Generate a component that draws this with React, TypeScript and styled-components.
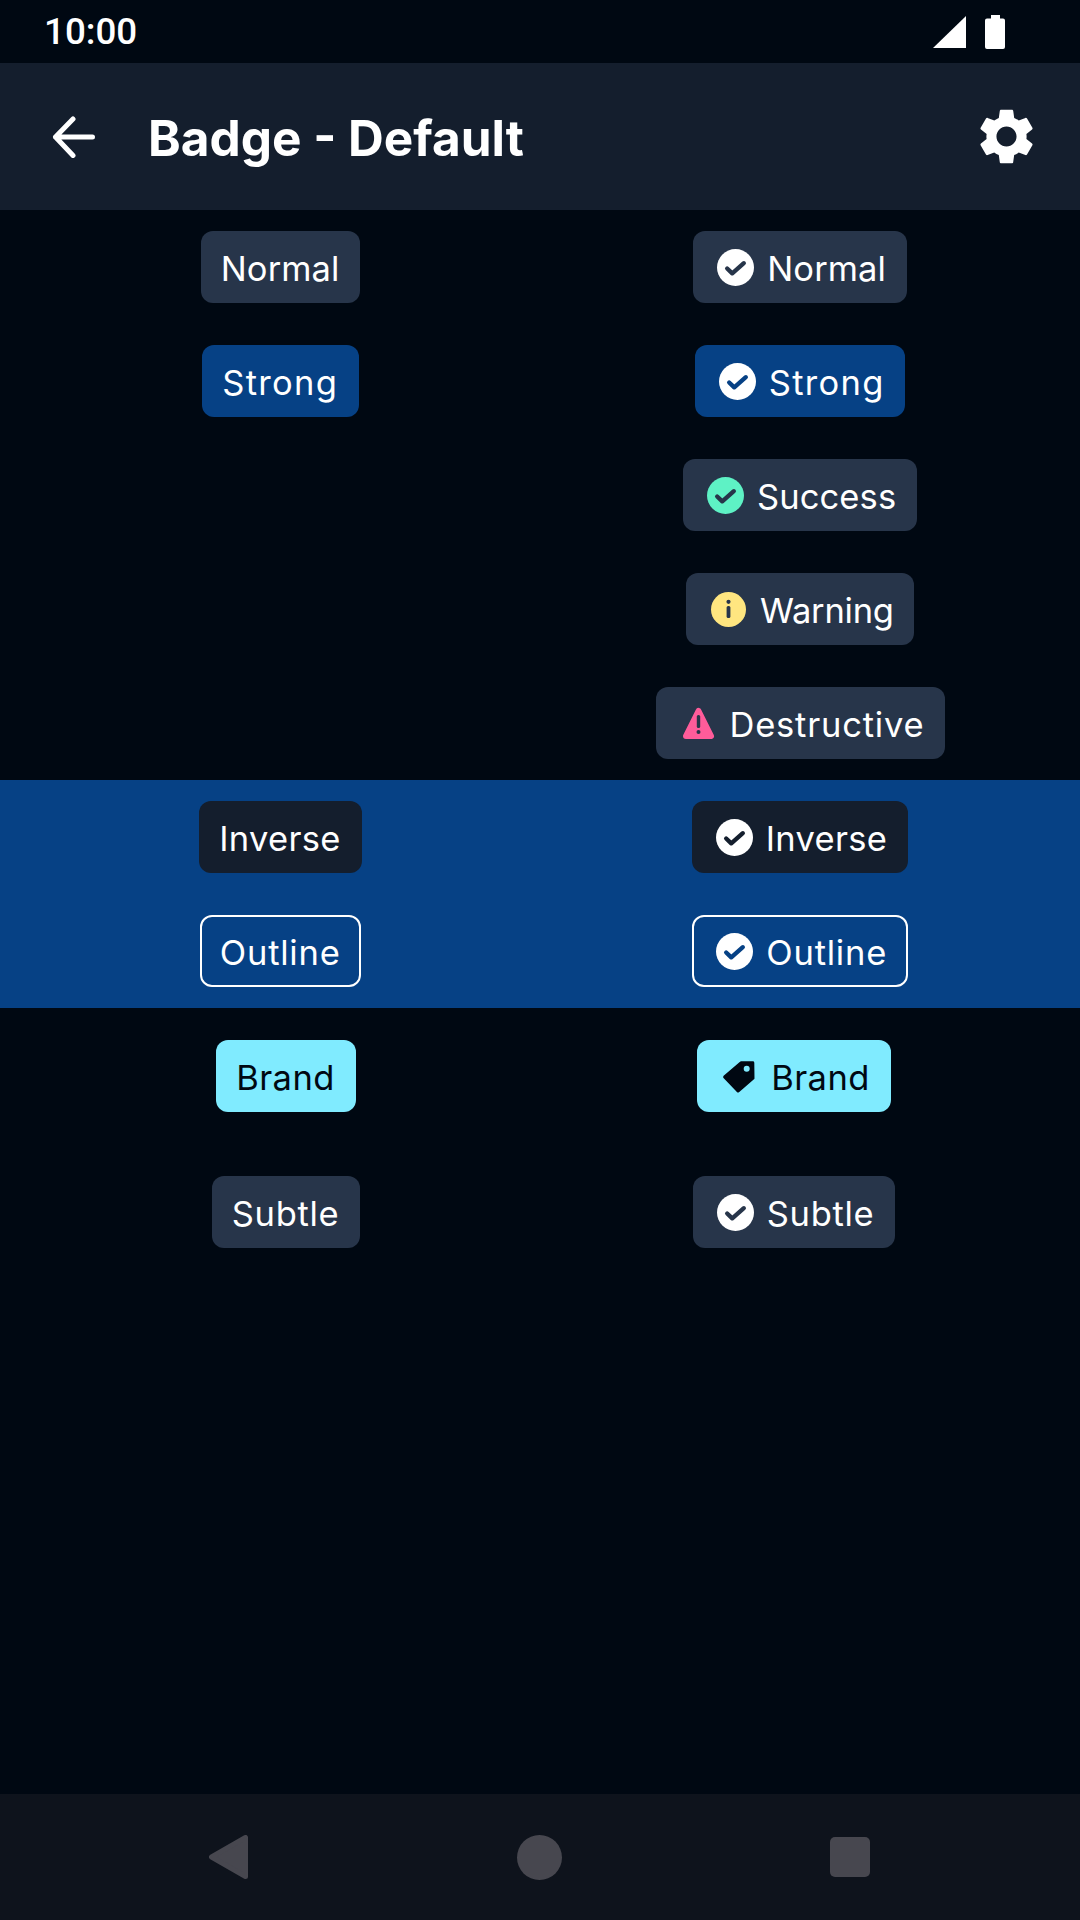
import React from 'react'
import styled, { createGlobalStyle } from 'styled-components'

const colors = {
  page: '#000812',
  toolbar: '#141e2d',
  subtle: '#27354a',
  strong: '#064185',
  inverse: '#141e2d',
  brand: '#80ebff',
  ink: '#000812',
  white: '#ffffff',
  success: '#5ef2c5',
  warning: '#ffe680',
  destructive: '#ff5c9a',
  navBar: '#0e131c',
  navIcon: '#47474f'
}

// measured per word, the original typeface runs a little differently from Inter
const labelMetrics: Record<string, { width: number; spacing: number }> = {
  Normal: { width: 115.5, spacing: 0.1 },
  Strong: { width: 112.5, spacing: 1.3 },
  Success: { width: 136, spacing: 0.1 },
  Warning: { width: 130, spacing: -0.25 },
  Destructive: { width: 191, spacing: 0.8 },
  Inverse: { width: 118.5, spacing: 0.3 },
  Outline: { width: 117.5, spacing: 0.8 },
  Brand: { width: 95.5, spacing: 0.4 },
  Subtle: { width: 104.5, spacing: 0.7 }
}

const GlobalStyle = createGlobalStyle`
  html, body {
    margin: 0;
    padding: 0;
    background: ${colors.page};
  }
`

const Screen = styled.div`
  width: 1080px;
  height: 1920px;
  display: flex;
  flex-direction: column;
  background: ${colors.page};
  color: ${colors.white};
  font-family: Inter, 'Noto Sans', sans-serif;
`

const StatusBar = styled.div`
  height: 63px;
  display: flex;
  align-items: center;
  justify-content: space-between;
  padding: 0 75px 0 44px;
`

const Time = styled.span`
  font-family: Roboto, sans-serif;
  font-size: 36.75px;
  font-weight: 500;
`

const StatusIcons = styled.div`
  display: flex;
  align-items: center;
  gap: 19px;
`

const Toolbar = styled.div`
  height: 147px;
  display: flex;
  align-items: center;
  padding: 0 40px 0 52px;
  background: ${colors.toolbar};
`

const Title = styled.h1`
  flex: 1;
  margin: 3px 0 0 53px;
  font-size: 49.5px;
  font-weight: 700;
`

const Section = styled.div<{ $columns: string; $band?: boolean; $gap: number; $top: number }>`
  display: grid;
  grid-template-columns: ${(p) => p.$columns};
  row-gap: ${(p) => p.$gap}px;
  justify-items: center;
  padding: ${(p) => p.$top}px 0 21px;
  background: ${(p) => (p.$band ? colors.strong : 'transparent')};
`

type Tone = 'subtle' | 'strong' | 'inverse' | 'outline' | 'brand'

const toneBackground: Record<Tone, string> = {
  subtle: colors.subtle,
  strong: colors.strong,
  inverse: colors.inverse,
  outline: 'transparent',
  brand: colors.brand
}

const BadgeBox = styled.div<{ $tone: Tone }>`
  box-sizing: border-box;
  height: 72px;
  display: flex;
  align-items: center;
  gap: 13px;
  padding: ${(p) => (p.$tone === 'outline' ? '0 22px 0 18px' : '0 24px 0 20px')};
  border-radius: 12px;
  border: ${(p) => (p.$tone === 'outline' ? `2px solid ${colors.white}` : 'none')};
  background: ${(p) => toneBackground[p.$tone]};
  color: ${(p) => (p.$tone === 'brand' ? colors.ink : colors.white)};
  font-size: 34.5px;
  font-weight: 375;

  svg {
    margin-left: 4px;
  }
`

const BadgeLabel = styled.span<{ $width: number; $spacing: number }>`
  width: ${(p) => p.$width}px;
  margin-top: 2px;
  letter-spacing: ${(p) => p.$spacing}px;
  white-space: nowrap;
`

const NavBar = styled.div`
  margin-top: auto;
  height: 126px;
  display: flex;
  align-items: center;
  background: ${colors.navBar};
  padding-left: 209px;
`

const NavBack = styled.svg`
  width: 39px;
  height: 44px;
`

const NavHome = styled.div`
  width: 45px;
  height: 45px;
  margin-left: 269px;
  border-radius: 50%;
  background: ${colors.navIcon};
`

const NavRecent = styled.div`
  width: 40px;
  height: 40px;
  margin-left: 268px;
  border-radius: 5px;
  background: ${colors.navIcon};
`

function CheckIcon({ fill, mark }: { fill: string; mark: string }) {
  return (
    <svg width="37" height="37" viewBox="0 0 24 24">
      <circle cx="12" cy="12" r="12" fill={fill} />
      <path d="M6.6 12.6 L9.9 15.8 L17.4 9.2" fill="none" stroke={mark} strokeWidth="2.8" strokeLinecap="round" strokeLinejoin="round" />
    </svg>
  )
}

function WarningIcon() {
  return (
    <svg width="37" height="37" viewBox="0 0 37 37">
      <circle cx="18.5" cy="18.5" r="17.5" fill={colors.warning} />
      <circle cx="18.5" cy="10.8" r="2.1" fill={colors.subtle} />
      <rect x="16.6" y="15" width="3.8" height="12" rx="1.5" fill={colors.subtle} />
    </svg>
  )
}

function DestructiveIcon() {
  return (
    <svg width="37" height="37" viewBox="0 0 37 37">
      <path d="M18.5 6 L31 31 H6 Z" fill={colors.destructive} stroke={colors.destructive} strokeWidth="6" strokeLinejoin="round" />
      <rect x="16.8" y="10" width="3.4" height="13" rx="1.5" fill={colors.subtle} />
      <circle cx="18.5" cy="27" r="2" fill={colors.subtle} />
    </svg>
  )
}

function TagIcon() {
  return (
    <svg width="37" height="37" viewBox="0 0 37 37">
      <path d="M20 4.8 L31.8 4.8 L32 20.2 L17 33 L3.6 19 Z" fill={colors.ink} stroke={colors.ink} strokeWidth="3" strokeLinejoin="round" />
      <circle cx="25.7" cy="10.8" r="3" fill={colors.brand} />
    </svg>
  )
}

function Badge({ tone, text, icon }: { tone: Tone; text: string; icon?: React.ReactNode }) {
  const { width, spacing } = labelMetrics[text]
  return (
    <BadgeBox $tone={tone}>
      {icon}
      <BadgeLabel $width={width} $spacing={spacing}>
        {text}
      </BadgeLabel>
    </BadgeBox>
  )
}

export default function App() {
  return (
    <Screen>
      <GlobalStyle />
      <StatusBar>
        <Time>10:00</Time>
        <StatusIcons>
          <svg width="33" height="32" viewBox="0 0 33 32">
            <path d="M33 0 V32 H0 Z" fill={colors.white} />
          </svg>
          <svg width="20" height="34" viewBox="0 0 20 34">
            <path d="M6 0 H15 V3.5 H18 Q20 3.5 20 5.5 V32 Q20 34 18 34 H2 Q0 34 0 32 V5.5 Q0 3.5 2 3.5 H6 Z" fill={colors.white} />
          </svg>
        </StatusIcons>
      </StatusBar>
      <Toolbar>
        <svg width="43" height="42" viewBox="0 0 43 42">
          <path d="M40.5 21 H3.5 M21 3 L3.5 21 L21 39.5" fill="none" stroke={colors.white} strokeWidth="5" strokeLinecap="round" strokeLinejoin="round" />
        </svg>
        <Title>Badge - Default</Title>
        <svg width="67" height="67" viewBox="0 0 24 24">
          <path
            fill={colors.white}
            d="M19.14 12.94c.04-.3.06-.61.06-.94 0-.32-.02-.64-.07-.94l2.03-1.58c.18-.14.23-.41.12-.61l-1.92-3.32c-.12-.22-.37-.29-.59-.22l-2.39.96c-.5-.38-1.03-.7-1.62-.94l-.36-2.54c-.04-.24-.24-.41-.48-.41h-3.84c-.24 0-.43.17-.47.41l-.36 2.54c-.59.24-1.13.57-1.62.94l-2.39-.96c-.22-.08-.47 0-.59.22L2.74 8.87c-.12.21-.08.47.12.61l2.03 1.58c-.05.3-.09.63-.09.94s.02.64.07.94l-2.03 1.58c-.18.14-.23.41-.12.61l1.92 3.32c.12.22.37.29.59.22l2.39-.96c.5.38 1.03.7 1.62.94l.36 2.54c.05.24.24.41.48.41h3.84c.24 0 .44-.17.47-.41l.36-2.54c.59-.24 1.13-.56 1.62-.94l2.39.96c.22.08.47 0 .59-.22l1.92-3.32c.12-.22.07-.47-.12-.61l-2.01-1.58zM12 15.6c-1.98 0-3.6-1.62-3.6-3.6s1.62-3.6 3.6-3.6 3.6 1.62 3.6 3.6-1.62 3.6-3.6 3.6z"
          />
        </svg>
      </Toolbar>

      <Section $columns="561px 478px" $gap={42} $top={21}>
        <Badge tone="subtle" text="Normal" />
        <Badge tone="subtle" text="Normal" icon={<CheckIcon fill={colors.white} mark={colors.subtle} />} />
        <Badge tone="strong" text="Strong" />
        <Badge tone="strong" text="Strong" icon={<CheckIcon fill={colors.white} mark={colors.strong} />} />
        <span />
        <Badge tone="subtle" text="Success" icon={<CheckIcon fill={colors.success} mark={colors.subtle} />} />
        <span />
        <Badge tone="subtle" text="Warning" icon={<WarningIcon />} />
        <span />
        <Badge tone="subtle" text="Destructive" icon={<DestructiveIcon />} />
      </Section>

      <Section $columns="561px 478px" $gap={42} $top={21} $band>
        <Badge tone="inverse" text="Inverse" />
        <Badge tone="inverse" text="Inverse" icon={<CheckIcon fill={colors.white} mark={colors.inverse} />} />
        <Badge tone="outline" text="Outline" />
        <Badge tone="outline" text="Outline" icon={<CheckIcon fill={colors.white} mark={colors.strong} />} />
      </Section>

      <Section $columns="572px 444px" $gap={64} $top={32}>
        <Badge tone="brand" text="Brand" />
        <Badge tone="brand" text="Brand" icon={<TagIcon />} />
        <Badge tone="subtle" text="Subtle" />
        <Badge tone="subtle" text="Subtle" icon={<CheckIcon fill={colors.white} mark={colors.subtle} />} />
      </Section>

      <NavBar>
        <NavBack viewBox="0 0 39 44">
          <path d="M36.5 2.5 V41.5 L2.5 22 Z" fill={colors.navIcon} stroke={colors.navIcon} strokeWidth="5" strokeLinejoin="round" />
        </NavBack>
        <NavHome />
        <NavRecent />
      </NavBar>
    </Screen>
  )
}
